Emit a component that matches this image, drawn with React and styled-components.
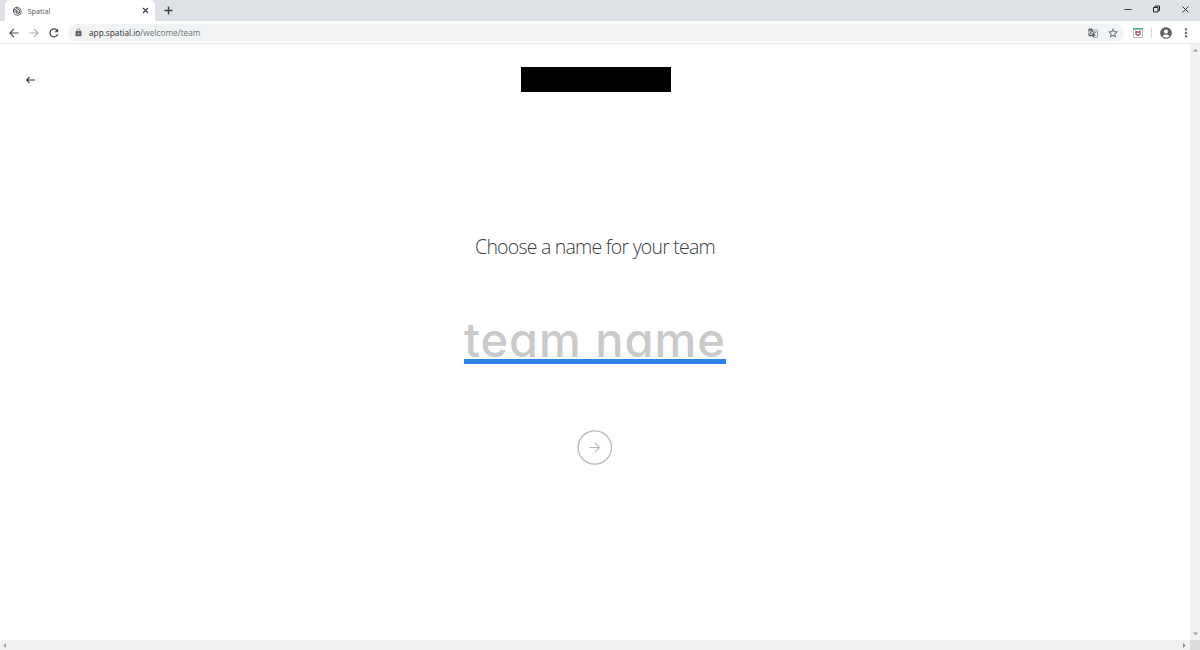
import styled, { createGlobalStyle } from "styled-components";
import { MdLock, MdAccountCircle, MdStarBorder, MdMoreVert, MdGTranslate } from "react-icons/md";

const GlobalStyle = createGlobalStyle`
  * {
    box-sizing: border-box;
  }
  body {
    margin: 0;
    overflow: hidden;
    background: #fff;
    font-family: "Open Sans", sans-serif;
  }
`;

const Browser = styled.div`
  width: 1200px;
  height: 650px;
  display: flex;
  flex-direction: column;
`;

const TabStrip = styled.div`
  height: 21px;
  flex: none;
  display: flex;
  background: #dee1e6;
  padding-left: 5px;
`;

const Tab = styled.div`
  width: 150px;
  display: flex;
  align-items: center;
  padding: 0 6.5px 0 7px;
  background: #fff;
  border-radius: 5px 5px 0 0;
`;

const TabTitle = styled.span`
  flex: 1;
  margin-left: 5.5px;
  font-size: 7.3px;
  line-height: 12px;
  color: #55585c;
`;

const NewTab = styled.div`
  display: flex;
  align-items: center;
  margin-left: 9px;
`;

const WindowButtons = styled.div`
  display: flex;
  align-items: center;
  gap: 19px;
  height: 18px;
  margin-left: auto;
  padding-right: 10px;
`;

const Toolbar = styled.div`
  height: 23px;
  flex: none;
  display: flex;
  align-items: center;
  padding: 1px 7px 0 8px;
  border-bottom: 1px solid #e6e7e9;
  background: #fff;
`;

const NavButtons = styled.div`
  display: flex;
  gap: 8px;
`;

const AddressBar = styled.div`
  width: 1056px;
  height: 17px;
  display: flex;
  align-items: center;
  margin-left: 8px;
  padding: 0 5px 0 6px;
  border-radius: 9px;
  background: #f1f3f4;
  color: #5f6368;
`;

const Url = styled.span`
  flex: 1;
  margin-left: 6px;
  font-size: 8.25px;
  line-height: 14px;
  color: #6f7377;
`;

const Host = styled.span`
  color: #2b2e32;
`;

const AddressIcons = styled.div`
  display: flex;
  align-items: center;
  gap: 9px;
`;

const Extensions = styled.div`
  display: flex;
  align-items: center;
  margin-left: 9px;
  color: #5f6368;
`;

const Divider = styled.div`
  width: 1px;
  height: 10px;
  margin: 0 7px 0 8px;
  background: #d5d7da;
`;

const MenuIcon = styled(MdMoreVert)`
  margin-left: 6px;
`;

const Viewport = styled.div`
  flex: 1;
  display: grid;
  grid-template-columns: 1190px 10px;
  grid-template-rows: 596px 10px;
`;

const Page = styled.main`
  display: flex;
  flex-direction: column;
  align-items: center;
  background: #fff;
`;

const PageHeader = styled.header`
  width: 100%;
  height: 71px;
  display: grid;
  grid-template-columns: 520.5px 150.3px 1fr;
  align-items: center;
`;

const BackButton = styled.div`
  display: flex;
  padding-left: 26px;
`;

const Redacted = styled.div`
  height: 25px;
  background: #000;
`;

const Title = styled.h1`
  margin: 118px 0 0;
  font-size: 19.5px;
  font-weight: 300;
  letter-spacing: -0.8px;
  word-spacing: 0.1px;
  line-height: 28px;
  white-space: nowrap;
  color: #39403f;
`;

const TeamName = styled.div`
  width: 262px;
  height: 49px;
  margin-top: 54px;
  border-bottom: 5px solid #2c82e4;
  font-family: "Inter", sans-serif;
  font-feature-settings: "cv11";
  font-size: 47px;
  font-weight: 500;
  letter-spacing: 0.95px;
  line-height: 50px;
  white-space: nowrap;
  color: #cacaca;
`;

const NextButton = styled.div`
  display: flex;
  margin-top: 66px;
`;

const ScrollBar = styled.div`
  display: flex;
  flex-direction: ${(props) => (props.$vertical ? "column" : "row")};
  align-items: center;
  justify-content: space-between;
  padding: ${(props) => (props.$vertical ? "4px 0" : "0 4px 0 3px")};
  background: #f1f1f1;
`;

const ScrollCorner = styled.div`
  background: #dcdcdc;
`;

const Arrow = ({ size, color, width, left }) => (
  <svg width={size} height={size} viewBox="0 0 12 12" fill="none" stroke={color} strokeWidth={width}>
    {left ? <path d="M10.5 6H2M6 1.9 1.9 6 6 10.1" /> : <path d="M1 6h9M6 1.9 10.1 6 6 10.1" />}
  </svg>
);

const SpatialLogo = () => (
  <svg width="10" height="10" viewBox="0 0 20 20" fill="none" stroke="#55585b" strokeWidth="1.8">
    <path d="M3 13V6l6-4 7 3 2 4v6l-6 4-6-2z" />
    <path d="M6 14V8l4-3 5 3v6l-4 2-2-2V9l3 1v4M3 6l3 2M9 2l1 3" />
  </svg>
);

const App = () => {
  return (
    <>
      <GlobalStyle />
      <Browser>
        <TabStrip>
          <Tab>
            <SpatialLogo />
            <TabTitle>Spatial</TabTitle>
            <svg width="7" height="7" viewBox="0 0 7 7" stroke="#3c4043" strokeWidth="1.1">
              <path d="m1 1 5 5M6 1 1 6" />
            </svg>
          </Tab>
          <NewTab>
            <svg width="9" height="9" viewBox="0 0 9 9" stroke="#3c4043" strokeWidth="1.4">
              <path d="M4.5.5v8M.5 4.5h8" />
            </svg>
          </NewTab>
          <WindowButtons>
            <svg width="10" height="10" viewBox="0 0 10 10" stroke="#333">
              <path d="M1.5 5.5h7" />
            </svg>
            <svg width="10" height="10" viewBox="0 0 10 10" fill="none" stroke="#222">
              <path d="M1.5 3.5H6V8H1.5zM3 3.5V2h4.5v4.5H6" />
            </svg>
            <svg width="9" height="9" viewBox="0 0 9 9" stroke="#222" strokeWidth=".9">
              <path d="m1.5 1.5 6 6M7.5 1.5l-6 6" />
            </svg>
          </WindowButtons>
        </TabStrip>
        <Toolbar>
          <NavButtons>
            <Arrow size={12} color="#4b4f53" width={1.2} left />
            <Arrow size={12} color="#b0b2b5" width={1.2} />
            <svg width="12" height="12" viewBox="0 0 12 12" fill="none" stroke="#4b4f53" strokeWidth="1.3">
              <path d="M9.7 7.3A4 4 0 1 1 9.2 3.5" />
              <path d="M10.2 1.5v3.7H6.5z" fill="#4b4f53" stroke="none" />
            </svg>
          </NavButtons>
          <AddressBar>
            <MdLock size={9} />
            <Url>
              <Host>app.spatial.io</Host>/welcome/team
            </Url>
            <AddressIcons>
              <MdGTranslate size={10} />
              <MdStarBorder size={12} />
            </AddressIcons>
          </AddressBar>
          <Extensions>
            <svg width="10" height="10" viewBox="0 0 10 10" fill="none">
              <path d="M.5.5h9v9h-9z" fill="#fff" stroke="#b9c2bd" />
              <path d="M0 .8h10" stroke="#43b086" strokeWidth="1.6" />
              <path d="M3 3.2v3.2l2 .9 2-.9V3.2L5 4.4z" stroke="#8f3a44" strokeWidth="1.1" />
            </svg>
            <Divider />
            <MdAccountCircle size={14} />
            <MenuIcon size={14} />
          </Extensions>
        </Toolbar>
        <Viewport>
          <Page>
            <PageHeader>
              <BackButton>
                <svg width="9" height="8" viewBox="0 0 9 8" fill="none" stroke="#303030">
                  <path d="M9 4H1M3.5 1.2.8 4l2.7 2.8" strokeWidth="1.2" />
                </svg>
              </BackButton>
              <Redacted />
            </PageHeader>
            <Title>Choose a name for your team</Title>
            <TeamName>team name</TeamName>
            <NextButton>
              <svg width="36" height="35" viewBox="0 0 36 35" fill="none" stroke="#b9b9b9">
                <circle cx="17.8" cy="17.5" r="16.7" strokeWidth="1.3" />
                <path d="M12.3 17.5h10M17.9 12.9l4.6 4.6-4.6 4.6" strokeWidth="1.2" />
              </svg>
            </NextButton>
          </Page>
          <ScrollBar $vertical>
            <svg width="5" height="4" viewBox="0 0 5 4" fill="#a3a3a3">
              <path d="M0 3.5 2.5.8 5 3.5z" />
            </svg>
            <svg width="5" height="4" viewBox="0 0 5 4" fill="#a3a3a3">
              <path d="M0 .5 2.5 3.2 5 .5z" />
            </svg>
          </ScrollBar>
          <ScrollBar>
            <svg width="4" height="5" viewBox="0 0 4 5" fill="#a3a3a3">
              <path d="M3 0 .3 2.5 3 5z" />
            </svg>
            <svg width="4" height="5" viewBox="0 0 4 5" fill="#8a8a8a">
              <path d="M1 0l2.7 2.5L1 5z" />
            </svg>
          </ScrollBar>
          <ScrollCorner />
        </Viewport>
      </Browser>
    </>
  );
};

export default App;
